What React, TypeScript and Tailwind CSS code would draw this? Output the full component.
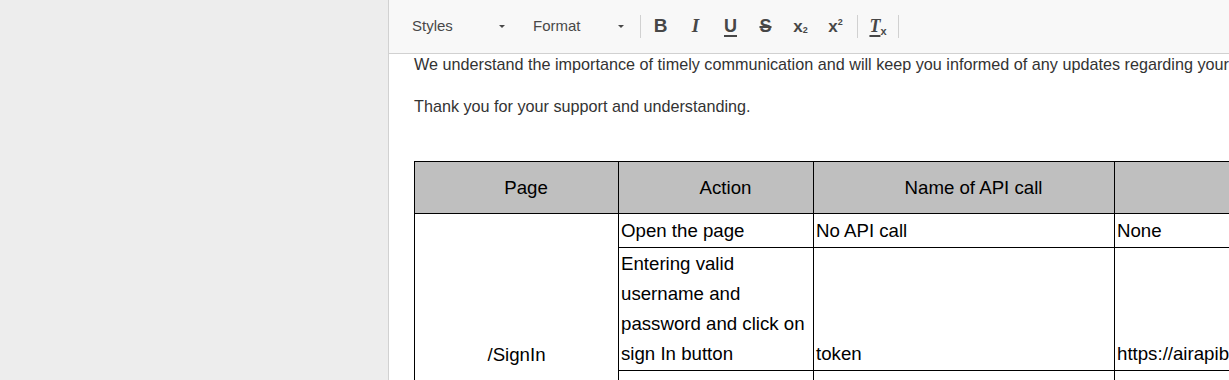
import React from 'react'

const sans = { fontFamily: '"Liberation Sans", Arial, sans-serif' }

function Caret() {
  return <span className="ml-auto h-0 w-0 border-x-[3px] border-t-[3px] border-x-transparent border-t-[#484848]" />
}

function Sep() {
  return <span className="h-[23px] w-px bg-[#d1d1d1]" />
}

function Btn({ children }: { children: React.ReactNode }) {
  return <span className="flex h-[28px] w-[35px] items-center justify-center text-[#474747]">{children}</span>
}

export default function App() {
  return (
    <div className="flex h-[380px] w-[1229px] overflow-hidden bg-white" style={sans}>
      <aside className="w-[389px] shrink-0 border-r border-[#d1d1d1] bg-[#ededed]" />

      <div className="flex min-w-0 flex-1 flex-col">
        {/* toolbar */}
        <div className="flex h-[54px] shrink-0 items-center border-b border-[#d1d1d1] bg-[#f8f8f8] pl-[23px] text-[15px] text-[#484848]">
          <span className="flex w-[95px] items-center pr-[2px]">
            Styles
            <Caret />
          </span>
          <span className="ml-[13px]"><Sep /></span>
          <span className="ml-[13px] flex w-[92px] items-center pr-[1px]">
            Format
            <Caret />
          </span>
          <span className="ml-[15px] flex items-center"><Sep /></span>
          <span className="ml-[2px] flex items-center">
            <Btn><span className="text-[19px] font-bold">B</span></Btn>
            <Btn><span className="text-[19px] font-bold italic" style={{ fontFamily: '"Liberation Serif", serif' }}>I</span></Btn>
            <Btn><span className="text-[18px] font-bold underline decoration-2 underline-offset-[3px]">U</span></Btn>
            <Btn><span className="text-[18px] font-bold line-through decoration-2">S</span></Btn>
            <Btn>
              <span className="text-[17px] font-bold">x</span>
              <span className="mt-[9px] text-[9px] font-bold">2</span>
            </Btn>
            <Btn>
              <span className="text-[17px] font-bold">x</span>
              <span className="-mt-[8px] text-[9px] font-bold">2</span>
            </Btn>
          </span>
          <span className="ml-[4px] flex items-center"><Sep /></span>
          <span className="ml-[2px] flex items-center">
            <span className="flex h-[28px] w-[36px] items-center justify-center text-[#474747]">
              <span className="text-[18px] font-bold italic underline decoration-2 underline-offset-[3px]" style={{ fontFamily: '"Liberation Serif", serif' }}>T</span>
              <span className="mt-[10px] text-[11px] font-bold">x</span>
            </span>
          </span>
          <span className="ml-[2px] flex items-center"><Sep /></span>
        </div>

        {/* document */}
        <div className="min-h-0 flex-1 overflow-hidden pl-[25px]">
          <div className="w-[1100px] text-[16.2px] leading-[25.6px] text-[#333]">
            <p className="-mt-[2px] whitespace-nowrap">
              We understand the importance of timely communication and will keep you informed of any updates regarding your request.
            </p>
            <p className="mt-[16px]">Thank you for your support and understanding.</p>

            <table className="mt-[42px] table-fixed border-collapse text-[18.67px] leading-[30px] text-black">
              <colgroup>
                <col className="w-[204px]" />
                <col className="w-[195px]" />
                <col className="w-[301px]" />
                <col className="w-[360px]" />
              </colgroup>
              <thead>
                <tr className="h-[52px] bg-[#bfbfbf]">
                  <th className="border border-black pl-[19px] text-center font-normal">Page</th>
                  <th className="border border-black pl-[19px] text-center font-normal">Action</th>
                  <th className="border border-black pl-[19px] text-center font-normal">Name of API call</th>
                  <th className="border border-black pl-[19px] text-center font-normal">API Endpoint</th>
                </tr>
              </thead>
              <tbody>
                <tr className="h-[34px]">
                  <td rowSpan={3} className="border border-black px-[3px] text-center align-middle">/SignIn</td>
                  <td className="border border-black px-[2px] py-px align-bottom">Open the page</td>
                  <td className="border border-black px-[2px] py-px align-bottom">No API call</td>
                  <td className="border border-black px-[2px] py-px align-bottom">None</td>
                </tr>
                <tr>
                  <td className="border border-black px-[2px] pt-px pb-[1px] align-bottom">Entering valid username and password and click on sign In button</td>
                  <td className="border border-black px-[2px] pb-[1px] align-bottom">token</td>
                  <td className="border border-black px-[2px] pb-[1px] align-bottom whitespace-nowrap">https://airapibeta.azurewebsites.net/token</td>
                </tr>
                <tr className="h-[126px]">
                  <td className="border border-black px-[2px] align-bottom">Entering invalid credentials</td>
                  <td className="border border-black px-[2px] align-bottom">token</td>
                  <td className="border border-black px-[2px] align-bottom">Error message</td>
                </tr>
              </tbody>
            </table>
          </div>
        </div>
      </div>
    </div>
  )
}
